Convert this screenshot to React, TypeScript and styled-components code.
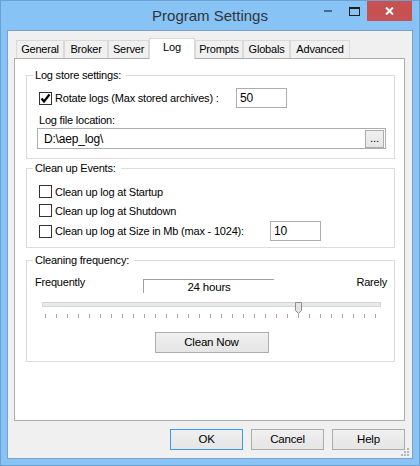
import React, {useState} from 'react';
import styled, {createGlobalStyle} from 'styled-components';

const GlobalStyle = createGlobalStyle`
  html, body { margin: 0; padding: 0; background: #fff; }
  body {
    font-family: "Liberation Sans", Arial, sans-serif;
    font-size: 11px;
    letter-spacing: -0.2px;
    color: #000;
  }
  * { box-sizing: border-box; }
`

const Window = styled.div`
  position: relative;
  width: 420px;
  height: 466px;
  background: #88c3f5;
  border: 1px solid #6d9fd3;
  display: flex;
  flex-direction: column;
`

const TitleBar = styled.div`
  height: 29px;
  display: grid;
  grid-template-columns: 1fr auto 1fr;
  align-items: start;
`

const Title = styled.div`
  grid-column: 2;
  font-size: 15px;
  letter-spacing: 0;
  line-height: 29px;
  color: #2d3640;
`

const Controls = styled.div`
  grid-column: 3;
  justify-self: end;
  display: flex;
  margin-right: 7px;
`

const CtrlButton = styled.div<{$w: number; $close?: boolean}>`
  width: ${p => p.$w}px;
  height: 20px;
  display: flex;
  align-items: center;
  justify-content: center;
  background: ${p => (p.$close ? '#c75050' : 'transparent')};
`

const Client = styled.div`
  position: relative;
  flex: 1;
  margin: 0 6px 6px;
  border: 1px solid #7d9fc8;
  background: #f0f0f0;
  padding: 7px 7px 0 6px;
  display: flex;
  flex-direction: column;
`

const TabStrip = styled.div`
  position: relative;
  z-index: 1;
  display: flex;
  align-items: flex-end;
  height: 21px;
  padding-left: 2px;
  margin-bottom: -1px;
`

const Tab = styled.div<{$w: number; $active?: boolean}>`
  width: ${p => p.$w}px;
  height: ${p => (p.$active ? 21 : 18)}px;
  margin-bottom: ${p => (p.$active ? 0 : 1)}px;
  border: 1px solid #d9d9d9;
  border-bottom: none;
  background: ${p => (p.$active ? '#fff' : '#f0f0f0')};
  text-align: center;
  line-height: 17px;
  white-space: nowrap;
`

const Panel = styled.div`
  height: 363px;
  background: #fff;
  border: 1px solid #adadad;
  padding: 9px 9px 0 11px;
  display: flex;
  flex-direction: column;
`

const Group = styled.fieldset<{$mt: number; $pt: number; $pb: number}>`
  margin: ${p => p.$mt}px 0 0 0;
  min-width: 0;
  border: 1px solid #dcdcdc;
  padding: ${p => p.$pt}px 8px ${p => p.$pb}px 10px;
`

const Legend = styled.legend`
  padding: 0 5px 0 2px;
  margin-left: -4px;
  line-height: 14px;
`

const Row = styled.div<{$h: number}>`
  display: flex;
  align-items: center;
  height: ${p => p.$h}px;
  margin-left: 2px;
`

const CheckLabel = styled.label<{$w: number}>`
  display: flex;
  align-items: center;
  width: ${p => p.$w}px;
  flex: none;
  white-space: nowrap;
  cursor: default;
`

const Box = styled.span`
  width: 13px;
  height: 13px;
  flex: none;
  margin-right: 3px;
  border: 1px solid #333;
  background: #fff;
  display: flex;
  align-items: center;
  justify-content: center;
`

const NumberBox = styled.div`
  width: 51px;
  height: 20px;
  border: 1px solid #abadb3;
  background: #fff;
  padding-left: 3px;
  line-height: 18px;
  font-size: 12px;
`

const Caption = styled.div`
  margin: 5px 0 0 2px;
  line-height: 14px;
`

const PathBox = styled.div`
  margin-top: 1px;
  height: 21px;
  border: 1px solid #abadb3;
  display: flex;
  align-items: center;
  padding: 0 1px 0 6px;
  font-size: 12px;
  > span { flex: 1; }
`

const Button = styled.button<{$w: number; $h: number; $focus?: boolean}>`
  width: ${p => p.$w}px;
  height: ${p => p.$h}px;
  padding: 0;
  font-family: inherit;
  font-size: 11.5px;
  letter-spacing: -0.2px;
  color: #000;
  border: 1px solid ${p => (p.$focus ? '#3399ff' : '#acacac')};
  background: linear-gradient(#f0f0f0, #e5e5e5);
  line-height: 1;
`

const FreqRow = styled.div`
  display: grid;
  grid-template-columns: 108px 131px 1fr;
  height: 18px;
  margin: 0 -1px 0 -2px;
  line-height: 14px;
  > span:last-child { text-align: right; }
`

const ValueBox = styled.div`
  margin-top: 4px;
  height: 14px;
  border-top: 1px solid #a0a0a0;
  border-left: 1px solid #a0a0a0;
  text-align: center;
  font-size: 11.5px;
  line-height: 15px;
`

const Slider = styled.div`
  position: relative;
  margin: 9px 0 0 5px;
  width: 339px;
  height: 20px;
`

const Track = styled.div`
  margin-top: 3px;
  height: 5px;
  border: 1px solid #d6d6d6;
  background: #e7eaea;
`

const Ticks = styled.div`
  margin: 7px 5px 0 3px;
  height: 4px;
  display: flex;
  justify-content: space-between;
  > i { width: 1px; height: 4px; background: #a8a8a8; }
`

const Thumb = styled.svg`
  position: absolute;
  top: 0;
`

const Center = styled.div`
  display: flex;
  justify-content: center;
  margin-top: 10px;
`

const Footer = styled.div`
  display: flex;
  justify-content: flex-end;
  gap: 8px;
  margin-top: 8px;
`

const Grip = styled.svg`
  position: absolute;
  right: 3px;
  bottom: 2px;
`

const tabs = [
  {name: 'General', w: 48},
  {name: 'Broker', w: 44},
  {name: 'Server', w: 41},
  {name: 'Log', w: 46},
  {name: 'Prompts', w: 48},
  {name: 'Globals', w: 47},
  {name: 'Advanced', w: 60},
]

const Check: React.FC<{checked?: boolean}> = ({checked}) => (
  <Box>
    {checked && (
      <svg width="11" height="11" viewBox="0 0 11 11">
        <path d="M1.5 5.5 L4 8.5 L9.5 1.5" stroke="#000" strokeWidth="2.2" fill="none" />
      </svg>
    )}
  </Box>
)

const App: React.FC = () => {
  const [tab, setTab] = useState('Log')
  const steps = 30
  const value = 23
  const thumbLeft = 3 + (value / steps) * 331 - 3.5

  return (
    <>
      <GlobalStyle />
      <Window>
        <TitleBar>
          <Title>Program Settings</Title>
          <Controls>
            <CtrlButton $w={26}>
              <svg width="8" height="2"><rect width="8" height="2" fill="#4a6a8c" /></svg>
            </CtrlButton>
            <CtrlButton $w={26}>
              <svg width="11" height="9">
                <rect x="0.5" y="0.5" width="10" height="8" fill="none" stroke="#1e1e1e" />
                <rect x="0" y="0" width="11" height="2" fill="#1e1e1e" />
              </svg>
            </CtrlButton>
            <CtrlButton $w={45} $close>
              <svg width="9" height="8">
                <path d="M1 0.5 L8 7.5 M8 0.5 L1 7.5" stroke="#fff" strokeWidth="2" />
              </svg>
            </CtrlButton>
          </Controls>
        </TitleBar>
        <Client>
          <TabStrip>
            {tabs.map(t => (
              <Tab key={t.name} $w={t.w} $active={t.name === tab} onClick={() => setTab(t.name)}>
                {t.name}
              </Tab>
            ))}
          </TabStrip>
          <Panel>
            <Group $mt={0} $pt={6} $pb={9}>
              <Legend>Log store settings:</Legend>
              <Row $h={20}>
                <CheckLabel $w={197}>
                  <Check checked />
                  Rotate logs (Max stored archives) :
                </CheckLabel>
                <NumberBox>50</NumberBox>
              </Row>
              <Caption>Log file location:</Caption>
              <PathBox>
                <span>D:\aep_log\</span>
                <Button $w={19} $h={18}>...</Button>
              </PathBox>
            </Group>

            <Group $mt={2} $pt={7} $pb={5}>
              <Legend>Clean up Events:</Legend>
              <Row $h={19}>
                <CheckLabel $w={231}><Check />Clean up log at Startup</CheckLabel>
              </Row>
              <Row $h={19}>
                <CheckLabel $w={231}><Check />Clean up log at Shutdown</CheckLabel>
              </Row>
              <Row $h={22}>
                <CheckLabel $w={231}><Check />Clean up log at Size in Mb (max - 1024):</CheckLabel>
                <NumberBox>10</NumberBox>
              </Row>
            </Group>

            <Group $mt={5} $pt={8} $pb={8}>
              <Legend>Cleaning frequency:</Legend>
              <FreqRow>
                <span>Frequently</span>
                <ValueBox>24 hours</ValueBox>
                <span>Rarely</span>
              </FreqRow>
              <Slider>
                <Track />
                <Ticks>
                  {Array.from({length: steps + 1}, (_, i) => <i key={i} />)}
                </Ticks>
                <Thumb width="7" height="13" style={{left: thumbLeft}}>
                  <path d="M0.5 0.5 H6.5 V8.5 L3.5 11.5 L0.5 8.5 Z" fill="#e3e3e3" stroke="#8e8e8e" />
                </Thumb>
              </Slider>
              <Center>
                <Button $w={114} $h={21}>Clean Now</Button>
              </Center>
            </Group>
          </Panel>
          <Footer>
            <Button $w={73} $h={21} $focus>OK</Button>
            <Button $w={73} $h={21}>Cancel</Button>
            <Button $w={73} $h={21}>Help</Button>
          </Footer>
          <Grip width="9" height="9">
            {[[7, 1], [7, 4], [4, 4], [7, 7], [4, 7], [1, 7]].map(([x, y], i) => (
              <rect key={i} x={x} y={y} width="2" height="2" fill="#b5b5b5" />
            ))}
          </Grip>
        </Client>
      </Window>
    </>
  )
}

export default App
